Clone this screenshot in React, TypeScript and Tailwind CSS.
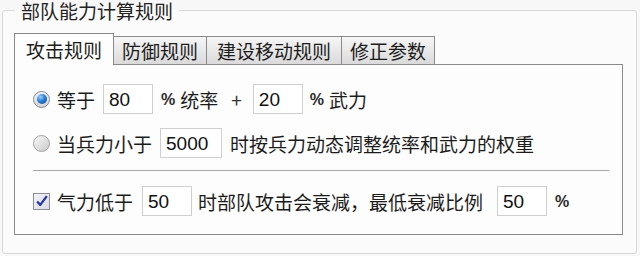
import React from 'react';

const font = { fontFamily: '"Noto Sans CJK SC", "Noto Sans", sans-serif' };

const tabs = [
  { label: '攻击规则', width: 'w-[100px]', active: true },
  { label: '防御规则', width: 'w-[93px]', active: false },
  { label: '建设移动规则', width: 'w-[135px]', active: false },
  { label: '修正参数', width: 'w-[93px]', active: false },
];

function Radio({ checked }: { checked?: boolean }) {
  return (
    <span
      className={
        checked
          ? 'flex h-[17px] w-[17px] shrink-0 items-center justify-center rounded-full border border-[#7f8a96] bg-gradient-to-b from-[#f4f4f4] to-[#d4d4d4]'
          : 'flex h-[17px] w-[17px] shrink-0 items-center justify-center rounded-full border border-[#a0a0a0] bg-gradient-to-br from-[#fafafa] to-[#c9c9c9]'
      }
    >
      {checked && (
        <span className="h-[10px] w-[10px] rounded-full bg-[radial-gradient(circle_at_35%_30%,#9fd2ff_0%,#2a7fd8_45%,#0b3e8c_100%)]" />
      )}
    </span>
  );
}

function Checkbox() {
  return (
    <span className="flex h-[17px] w-[17px] shrink-0 items-center justify-center border border-[#8e8f99] bg-gradient-to-br from-[#f2f2f8] to-[#dadbe6]">
      <svg viewBox="0 0 16 16" className="h-[14px] w-[14px]">
        <path d="M2.5 8.5 L6 12.5 L13.5 2.5" fill="none" stroke="#2537a0" strokeWidth="2.6" strokeLinejoin="round" />
      </svg>
    </span>
  );
}

function Field({ value, width, className = '' }: { value: string; width: string; className?: string }) {
  return (
    <span
      className={`flex h-[30px] ${width} shrink-0 items-center border border-[#cfcfcf] bg-white pl-[5px] text-[19px] text-[#111] ${className}`}
      style={{ fontFamily: '"Liberation Sans", Arial, sans-serif' }}
    >
      {value}
    </span>
  );
}

function Pct({ className = '' }: { className?: string }) {
  return (
    <span
      className={`mt-[2px] text-[16px] font-bold text-[#2a2a2a] ${className}`}
      style={{ fontFamily: '"Liberation Sans", Arial, sans-serif' }}
    >
      %
    </span>
  );
}

export default function App() {
  return (
    <div className="h-[256px] w-[640px] overflow-hidden bg-[#f7f7f7] text-[19px] leading-none text-[#1c1c1c]" style={font}>
      <fieldset className="ml-[2px] h-[254px] w-[635px] rounded-[3px] border border-[#d8d8d8] bg-[#fbfbfb] px-[11px] pt-[12px]">
        <legend className="ml-[1px] px-[6px] pt-[1px] text-[19px] leading-[20px] text-[#222]">部队能力计算规则</legend>

        {/* Tab strip */}
        <div className="flex items-end">
          {tabs.map((t) =>
            t.active ? (
              <div
                key={t.label}
                className={`relative z-10 -mb-px flex h-[32px] ${t.width} items-center justify-center border border-b-0 border-[#8a8a8a] bg-[#fdfdfd]`}
              >
                {t.label}
              </div>
            ) : (
              <div
                key={t.label}
                className={`flex h-[28px] ${t.width} items-center justify-center border border-l-0 border-b-0 border-[#8a8a8a] bg-gradient-to-b from-[#f6f6f6] to-[#dadada]`}
              >
                {t.label}
              </div>
            ),
          )}
        </div>

        {/* Tab panel */}
        <div className="h-[171px] w-[609px] border border-[#8a8a8a] bg-[#fdfdfd] pl-[18px] pr-[14px] pt-[19px]">
          <div className="flex h-[30px] items-center">
            <Radio checked />
            <span className="ml-[7px]">等于</span>
            <Field value="80" width="w-[50px]" className="ml-[8px]" />
            <Pct className="ml-[8px]" />
            <span className="ml-[5px]">统率</span>
            <span className="ml-[13px] text-[#333]">+</span>
            <Field value="20" width="w-[50px]" className="ml-[11px]" />
            <Pct className="ml-[7px]" />
            <span className="ml-[5px]">武力</span>
          </div>

          <div className="mt-[14px] flex h-[30px] items-center">
            <Radio />
            <span className="ml-[7px]">当兵力小于</span>
            <Field value="5000" width="w-[62px]" className="ml-[8px]" />
            <span className="ml-[8px]">时按兵力动态调整统率和武力的权重</span>
          </div>

          <div className="mt-[12px] w-[576px] border-t border-[#a8a8a8]" />

          <div className="mt-[15px] flex h-[30px] items-center">
            <Checkbox />
            <span className="ml-[7px]">气力低于</span>
            <Field value="50" width="w-[50px]" className="ml-[9px]" />
            <span className="ml-[6px]">时部队攻击会衰减，最低衰减比例</span>
            <Field value="50" width="w-[50px]" className="ml-[14px]" />
            <Pct className="ml-[8px]" />
          </div>
        </div>
      </fieldset>
    </div>
  );
}
